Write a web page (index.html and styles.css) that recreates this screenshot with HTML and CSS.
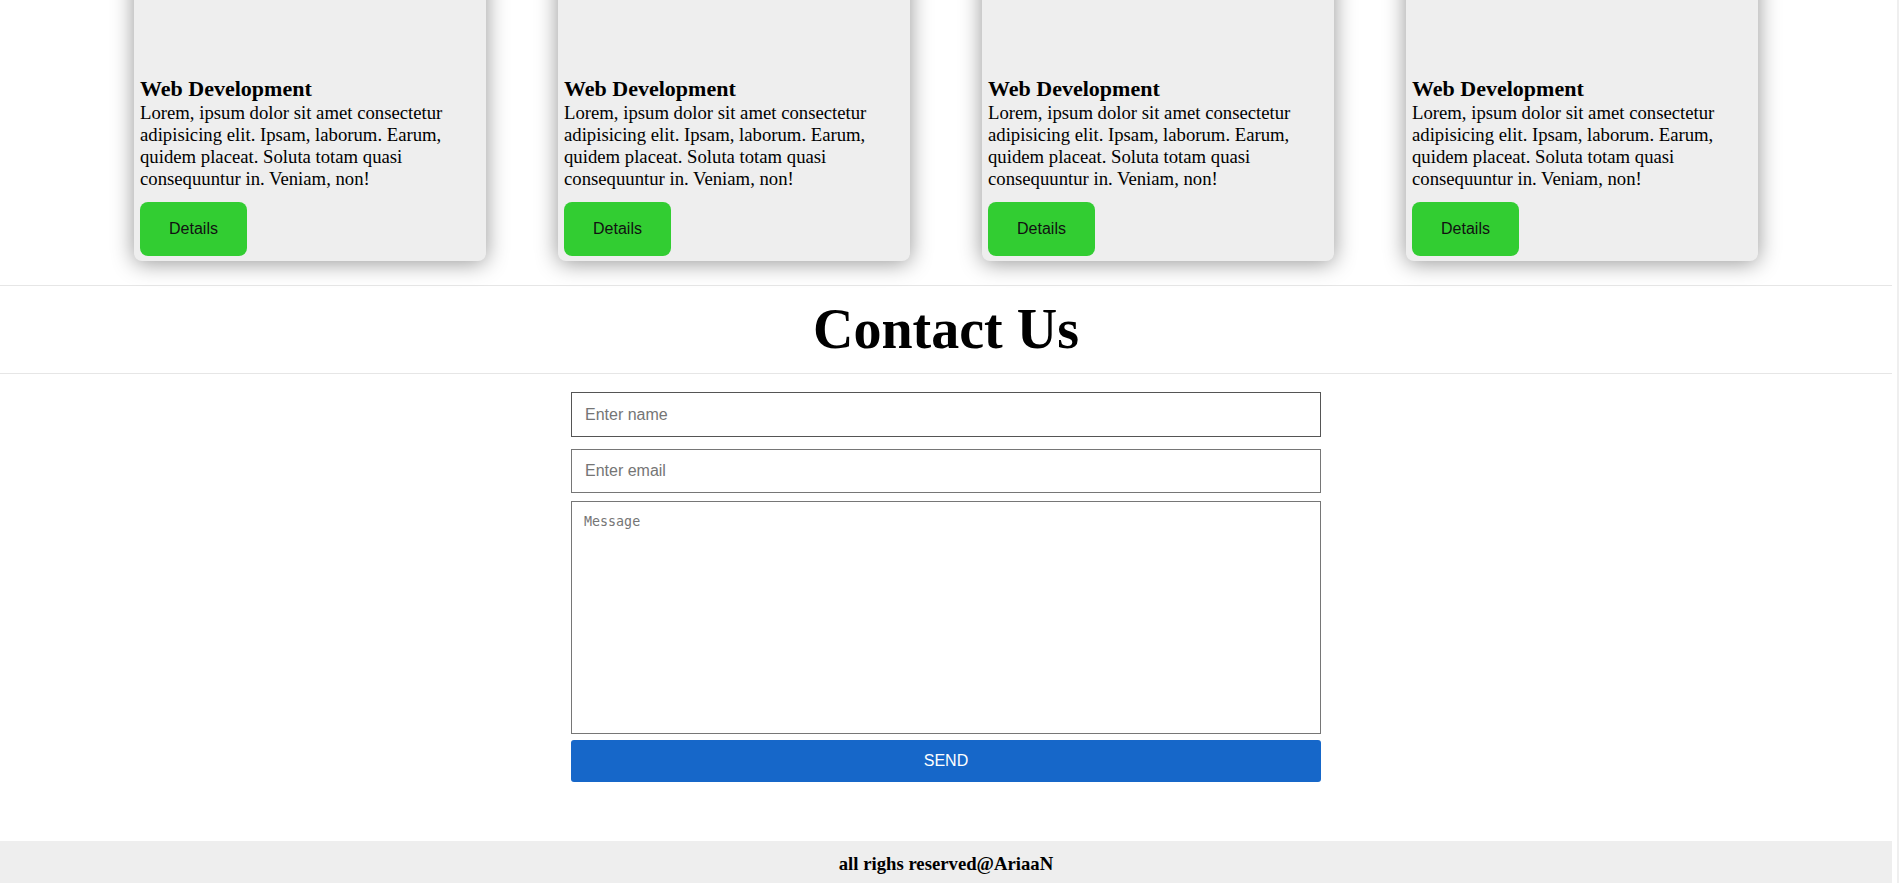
FILE: index.html
```html
<!DOCTYPE html>
<html lang="en">
<head>
<meta charset="utf-8">
<title>Contact Us</title>
<link rel="stylesheet" href="styles.css">
</head>
<body>
<div class="page">
  <section class="services">
    <div class="card">
      <div class="card-image"></div>
      <h3 class="card-title">Web Development</h3>
      <p class="card-text">Lorem, ipsum dolor sit amet consectetur adipisicing elit. Ipsam, laborum. Earum, quidem placeat. Soluta totam quasi consequuntur in. Veniam, non!</p>
      <button class="details-btn">Details</button>
    </div>
    <div class="card">
      <div class="card-image"></div>
      <h3 class="card-title">Web Development</h3>
      <p class="card-text">Lorem, ipsum dolor sit amet consectetur adipisicing elit. Ipsam, laborum. Earum, quidem placeat. Soluta totam quasi consequuntur in. Veniam, non!</p>
      <button class="details-btn">Details</button>
    </div>
    <div class="card">
      <div class="card-image"></div>
      <h3 class="card-title">Web Development</h3>
      <p class="card-text">Lorem, ipsum dolor sit amet consectetur adipisicing elit. Ipsam, laborum. Earum, quidem placeat. Soluta totam quasi consequuntur in. Veniam, non!</p>
      <button class="details-btn">Details</button>
    </div>
    <div class="card">
      <div class="card-image"></div>
      <h3 class="card-title">Web Development</h3>
      <p class="card-text">Lorem, ipsum dolor sit amet consectetur adipisicing elit. Ipsam, laborum. Earum, quidem placeat. Soluta totam quasi consequuntur in. Veniam, non!</p>
      <button class="details-btn">Details</button>
    </div>
  </section>

  <header class="contact-header">
    <h1 class="contact-title">Contact Us</h1>
  </header>

  <form class="contact-form">
    <input class="field field-name" type="text" placeholder="Enter name">
    <input class="field field-email" type="email" placeholder="Enter email">
    <textarea class="message" placeholder="Message"></textarea>
    <button class="send-btn" type="button">SEND</button>
  </form>

  <footer class="footer">
    <h3 class="footer-text">all righs reserved@AriaaN</h3>
  </footer>
</div>
</body>
</html>
```

FILE: styles.css
```css
html {
  background: #efefef;
}

body {
  margin: 0;
  font-family: "Liberation Serif", "Times New Roman", serif;
  color: #000;
}

.page {
  margin-right: 2px;
  background: #fff;
  padding-right: 5px;
  overflow: hidden;
}

/* Cards */
.services {
  display: flex;
  justify-content: center;
  gap: 72px;
  margin-top: -120px;
  padding-bottom: 24px;
}

.card {
  width: 352px;
  box-sizing: border-box;
  background: #eeeeee;
  border-radius: 8px;
  padding: 0 6px 5px;
  box-shadow: 0 2px 22px rgba(0, 0, 0, 0.42);
  display: flex;
  flex-direction: column;
  align-items: flex-start;
}

.card-image {
  height: 196px;
  align-self: stretch;
}

.card-title {
  margin: 0;
  font-size: 22px;
  font-weight: bold;
}

.card-text {
  margin: 0;
  font-size: 18.72px;
}

.details-btn {
  margin-top: 12px;
  width: 107px;
  height: 54px;
  border: none;
  border-radius: 8px;
  background: #32cd32;
  color: #111;
  font-family: "Liberation Sans", Arial, sans-serif;
  font-size: 16px;
  cursor: pointer;
}

/* Contact header */
.contact-header {
  border-top: 1px solid #e6e6e6;
  border-bottom: 1px solid #e6e6e6;
  padding: 11px 0 12px;
  text-align: center;
}

.contact-title {
  margin: 0;
  font-size: 56px;
  font-weight: bold;
}

/* Form */
.contact-form {
  width: 750px;
  margin: 18px auto 0;
  display: flex;
  flex-direction: column;
}

.field {
  height: 44px;
  box-sizing: border-box;
  border: 1px solid #767676;
  padding: 0 13px;
  font-family: "Liberation Sans", Arial, sans-serif;
  font-size: 16px;
  outline: none;
}

.field::placeholder {
  color: #757575;
}

.field-name {
  height: 45px;
  border-color: #555;
}

.field-email {
  margin-top: 12px;
}

.message {
  margin-top: 8px;
  height: 233px;
  box-sizing: border-box;
  border: 1px solid #767676;
  padding: 12px;
  font-family: "DejaVu Sans Mono", monospace;
  font-size: 13.33px;
  resize: none;
  outline: none;
}

.message::placeholder {
  color: #757575;
}

.send-btn {
  margin-top: 6px;
  height: 42px;
  border: none;
  border-radius: 3px;
  background: #1667c9;
  color: #fff;
  font-family: "Liberation Sans", Arial, sans-serif;
  font-size: 16px;
  cursor: pointer;
}

/* Footer */
.footer {
  margin-top: 59px;
  background: #eeeeee;
  padding: 12px 0 9px;
  text-align: center;
}

.footer-text {
  margin: 0;
  font-size: 18.72px;
  font-weight: bold;
}
```
